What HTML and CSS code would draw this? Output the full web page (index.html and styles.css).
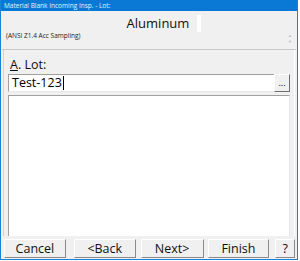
FILE: index.html
```html
<!doctype html>
<html lang="en">
<head>
	<meta charset="UTF-8">
	<title>Material Blank Incoming Insp. - Lot:</title>
	<link rel="stylesheet" href="styles.css">
</head>
<body>
	<div class="window">
		<div class="titlebar">Material Blank Incoming Insp. - Lot:</div>
		<div class="header">
			<div class="heading">
				<span class="heading-text">Aluminum</span>
				<span class="caret-box"></span>
			</div>
			<div class="subheading">(ANSI Z1.4 Acc Sampling)</div>
			<div class="spin">
				<span>&#9650;</span>
				<span>&#9660;</span>
			</div>
		</div>
		<div class="panel">
			<div class="label"><u>A</u>. Lot:</div>
			<div class="input-row">
				<div class="textbox">Test-123<span class="cursor"></span></div>
				<div class="browse">...</div>
			</div>
			<div class="memo"></div>
		</div>
		<div class="buttons">
			<div class="btn btn-wide">Cancel</div>
			<div class="btn btn-wide btn-back">&lt;Back</div>
			<div class="btn btn-wide btn-next">Next&gt;</div>
			<div class="btn btn-wide btn-finish">Finish</div>
			<div class="btn btn-help">?</div>
		</div>
	</div>
</body>
</html>
```

FILE: styles.css
```css
body {
	margin: 0;
	padding: 0;
	background: #fff;
	font-family: "Segoe UI", "Open Sans", "Noto Sans", sans-serif;
}

.window {
	width: 296px;
	height: 259px;
	border: 1px solid #1883d7;
	border-top: none;
	background: #f0f0f0;
	display: flex;
	flex-direction: column;
}

.titlebar {
	height: 11px;
	line-height: 11px;
	background: #0a78d5;
	color: #e8f2fb;
	font-size: 6.5px;
	padding-left: 3px;
}

/*标题区域*/
.header {
	height: 38px;
	position: relative;
	border-bottom: 1px solid #c8c8c8;
	margin: 0 1px;
}

.heading {
	display: flex;
	justify-content: center;
	align-items: center;
	padding-top: 3px;
	height: 18px;
}

.heading-text {
	font-size: 13px;
	color: #111;
	margin-left: 30px;
}

.caret-box {
	width: 4px;
	height: 17px;
	background: #fff;
	margin-left: 8px;
}

.subheading {
	font-size: 6.5px;
	color: #222;
	padding: 0 0 0 4px;
	margin-top: -1px;
}

.spin {
	position: absolute;
	right: 4px;
	top: 22px;
	display: flex;
	flex-direction: column;
	font-size: 4px;
	line-height: 6px;
	color: #b8b8b8;
}

/*输入区域*/
.panel {
	flex: 1;
	margin: 0 2px;
	padding: 7px 4px 0 4px;
	border-left: 1px solid #d4d4d4;
	border-right: 1px solid #fff;
	display: flex;
	flex-direction: column;
}

.label {
	font-size: 12.5px;
	color: #111;
	height: 16px;
	line-height: 16px;
	padding-left: 2px;
}

.input-row {
	display: flex;
	height: 18px;
	margin-top: 1px;
}

.textbox {
	flex: 1;
	background: #fff;
	border-top: 1px solid #a0a0a0;
	border-left: 1px solid #a0a0a0;
	border-bottom: 1px solid #e8e8e8;
	font-size: 12.5px;
	line-height: 16px;
	padding-left: 3px;
	color: #000;
	display: flex;
	align-items: center;
}

.cursor {
	width: 1px;
	height: 14px;
	background: #000;
	margin-left: 1px;
}

.browse {
	width: 16px;
	background: #f0f0f0;
	border-top: 1px solid #fff;
	border-left: 1px solid #fff;
	border-right: 1px solid #6e6e6e;
	border-bottom: 1px solid #6e6e6e;
	font-size: 9px;
	line-height: 16px;
	text-align: center;
	color: #000;
	box-sizing: border-box;
}

.memo {
	flex: 1;
	margin-top: 3px;
	background: #fff;
	border-top: 1px solid #a0a0a0;
	border-left: 1px solid #a0a0a0;
	border-right: 1px solid #e4e4e4;
}

/*底部按钮*/
.buttons {
	display: flex;
	padding: 3px 2px 0 3px;
	height: 20px;
}

.btn {
	height: 17px;
	line-height: 17px;
	text-align: center;
	font-size: 12.5px;
	color: #111;
	background: #f0f0f0;
	border-top: 1px solid #fff;
	border-left: 1px solid #fff;
	border-right: 1px solid #8a8a8a;
	border-bottom: 1px solid #8a8a8a;
}

.btn-wide {
	width: 61px;
}

.btn-back {
	margin-left: 8px;
}

.btn-next {
	margin-left: 5px;
	width: 62px;
}

.btn-finish {
	margin-left: 4px;
}

.btn-help {
	width: 18px;
	margin-left: 6px;
}
```
